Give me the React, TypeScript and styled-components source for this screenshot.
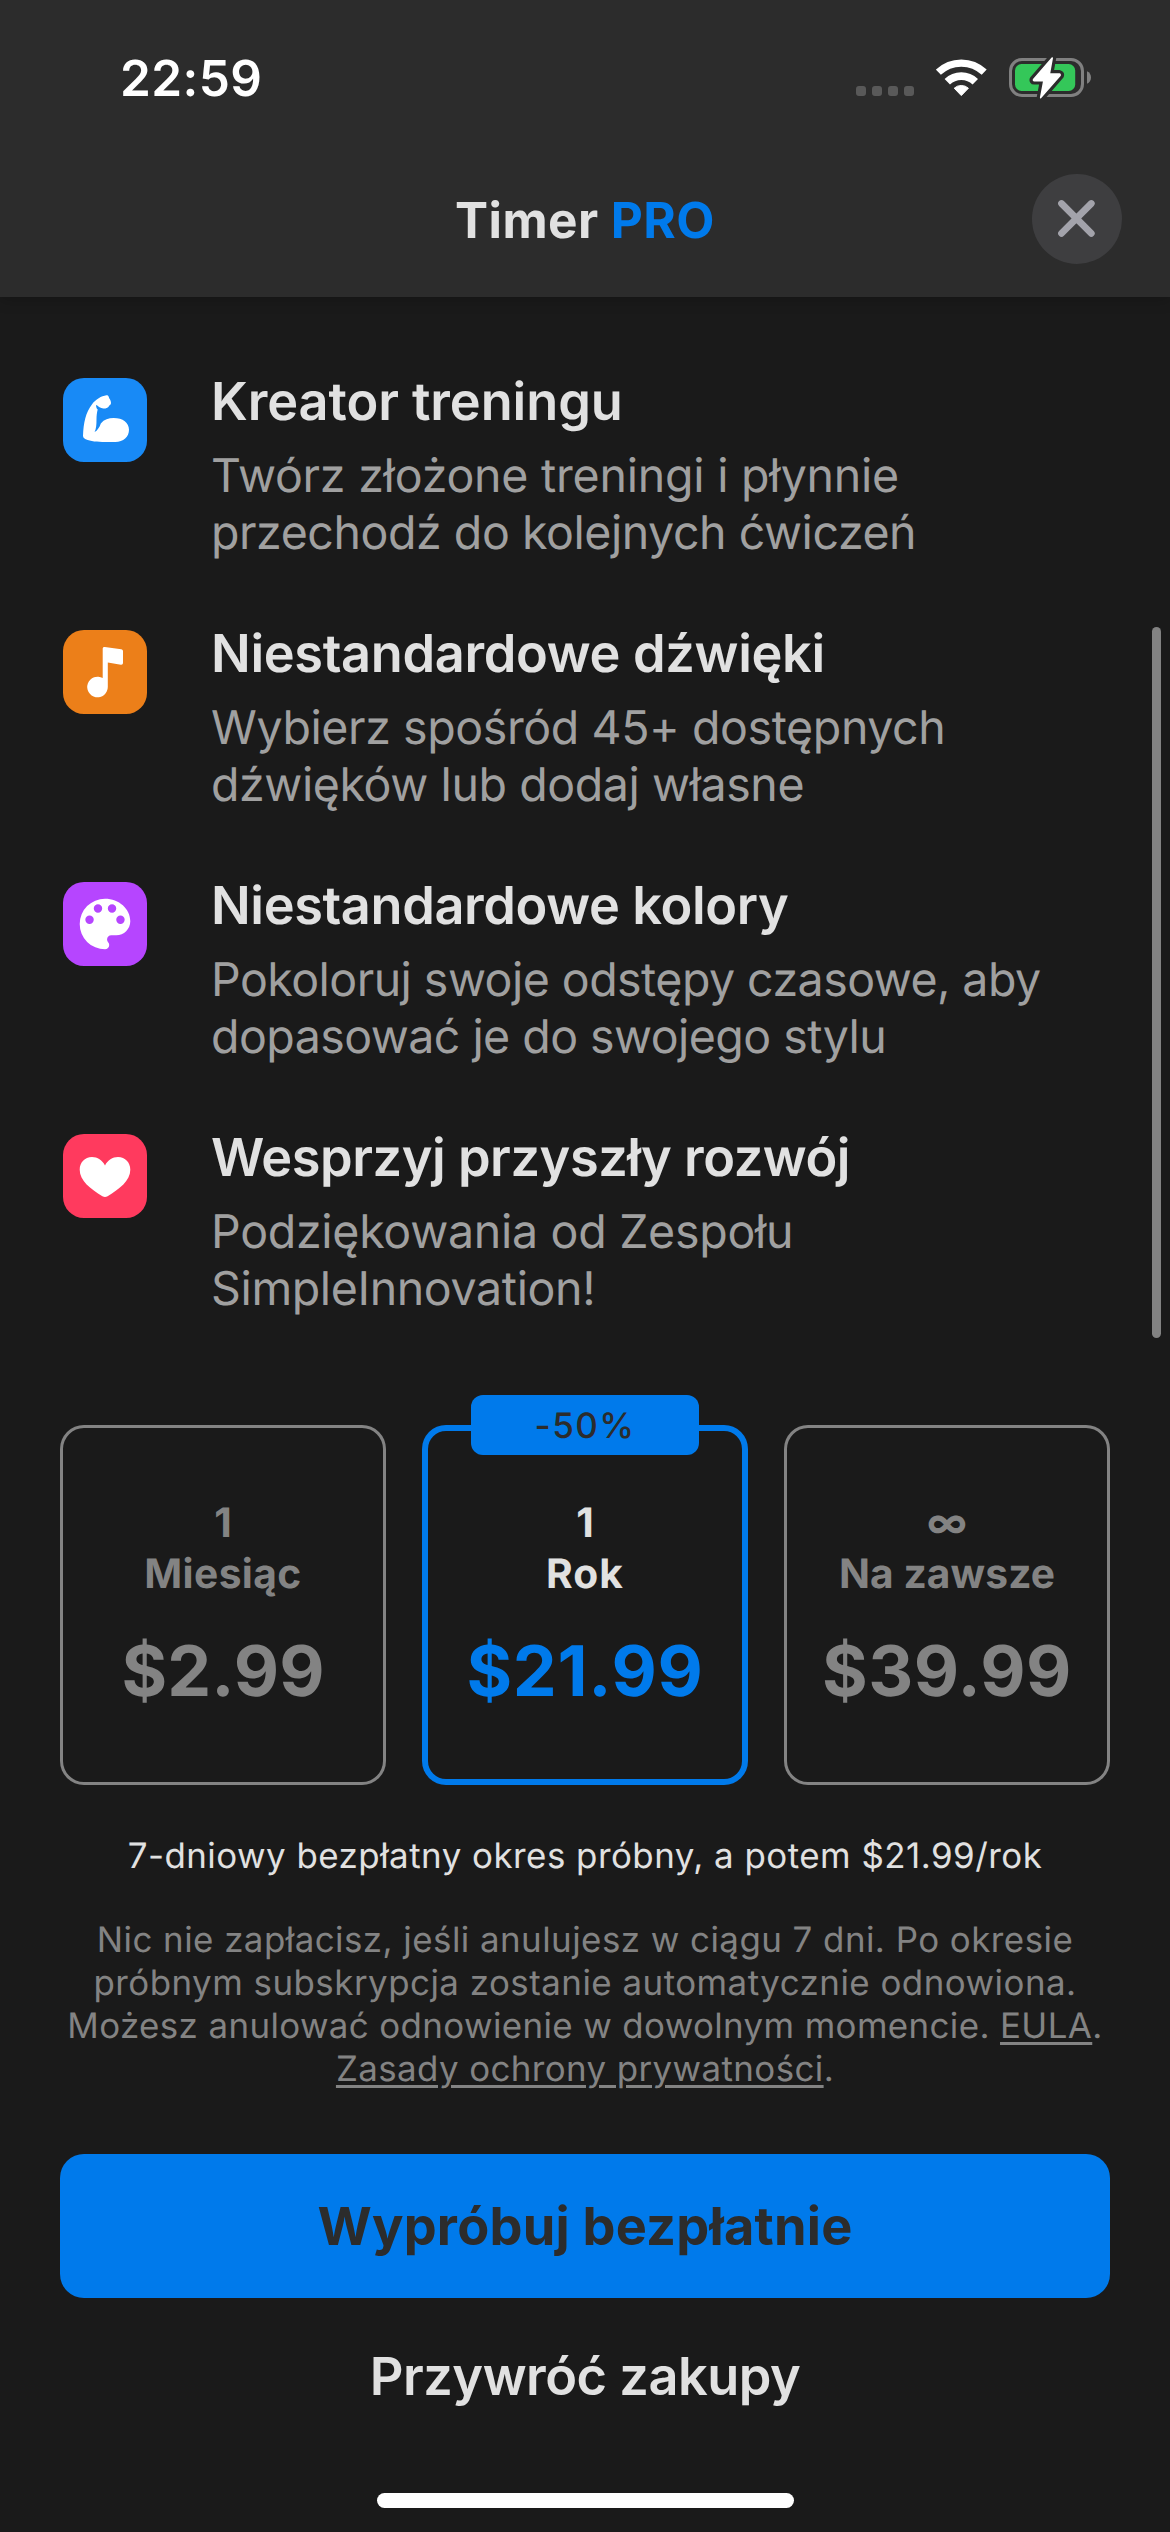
import React from "react";
import styled, { createGlobalStyle } from "styled-components";

const color = {
  bg: "#1a1a1a",
  bar: "#2c2c2c",
  text: "#e1e1e1",
  secondary: "#a0a0a0",
  muted: "#838383",
  accent: "#007aeb",
};

const GlobalStyle = createGlobalStyle`
  * { box-sizing: border-box; }
  html, body { margin: 0; background: ${color.bg}; }
  body {
    font-family: Inter, "Liberation Sans", sans-serif;
    text-rendering: geometricPrecision;
    -webkit-font-smoothing: antialiased;
  }
`;

const Screen = styled.div`
  position: relative;
  width: 1170px;
  height: 2532px;
  display: flex;
  flex-direction: column;
  overflow: hidden;
  background: ${color.bg};
  color: ${color.text};
`;

const Header = styled.header`
  flex: none;
  height: 297px;
  background: ${color.bar};
  box-shadow: 0 2px 14px rgba(0, 0, 0, 0.22);
`;

const StatusBar = styled.div`
  height: 141px;
  padding: 15px 79px 0 120px;
  display: flex;
  align-items: center;
  justify-content: space-between;
`;

const Clock = styled.time`
  font-size: 49.5px;
  line-height: 60px;
  font-weight: 600;
  letter-spacing: 0.43px;
  color: #fff;
`;

const StatusIcons = styled.div`
  display: flex;
  align-items: center;
  gap: 22px;

  svg { display: block; }
`;

const NavBar = styled.div`
  height: 156px;
  padding: 0 48px;
  display: grid;
  grid-template-columns: 1fr auto 1fr;
  align-items: center;
`;

const Title = styled.h1`
  grid-column: 2;
  margin: 0;
  padding-top: 2px;
  font-size: 49.5px;
  line-height: 60px;
  font-weight: 700;
  letter-spacing: 0.45px;
`;

const Pro = styled.span`
  color: ${color.accent};
`;

const CloseButton = styled.button`
  justify-self: end;
  width: 90px;
  height: 90px;
  padding: 0;
  border: 0;
  border-radius: 50%;
  background: #3e3e40;

  svg { display: block; }
`;

const Content = styled.main`
  flex: 1;
  padding: 72px 60px 0;
  display: flex;
  flex-direction: column;
`;

const FeatureList = styled.ul`
  margin: 0;
  padding: 0 0 0 3px;
  list-style: none;
  display: flex;
  flex-direction: column;
  gap: 59px;
`;

const Feature = styled.li`
  display: flex;
  align-items: flex-start;
  gap: 64px;
`;

const FeatureIcon = styled.div<{ $bg: string }>`
  flex: none;
  width: 84px;
  height: 84px;
  margin-top: 9px;
  border-radius: 21px;
  background: ${(p) => p.$bg};

  svg { display: block; }
`;

const FeatureText = styled.div`
  display: flex;
  flex-direction: column;
  gap: 15px;
`;

const FeatureTitle = styled.h2<{ $tracking: number }>`
  margin: 0;
  font-size: 52.3px;
  line-height: 64px;
  font-weight: 600;
  letter-spacing: ${(p) => p.$tracking}px;
  white-space: nowrap;
`;

const FeatureBody = styled.p`
  margin: 0;
  font-size: 46.5px;
  line-height: 57px;
  color: ${color.secondary};
`;

const Line = styled.span<{ $tracking: number }>`
  display: block;
  letter-spacing: ${(p) => p.$tracking}px;
  white-space: nowrap;
`;

const Plans = styled.div`
  margin-top: 107px;
  display: grid;
  grid-template-columns: repeat(3, 326px);
  gap: 36px;
`;

const Plan = styled.div<{ $selected?: boolean }>`
  position: relative;
  height: 360px;
  padding-top: 72px;
  border-radius: 24px;
  box-shadow: inset 0 0 0 ${(p) => (p.$selected ? `6px ${color.accent}` : `3px ${color.muted}`)};
  display: flex;
  flex-direction: column;
  align-items: center;
  color: ${(p) => (p.$selected ? color.text : color.muted)};
`;

const PlanBadge = styled.span`
  position: absolute;
  top: -30px;
  left: 49px;
  width: 228px;
  height: 60px;
  border-radius: 12px;
  background: ${color.accent};
  color: ${color.bar};
  font-size: 35px;
  line-height: 62px;
  font-weight: 500;
  letter-spacing: 1.4px;
  text-align: center;
`;

const PlanPeriod = styled.span<{ $tracking?: number }>`
  font-size: 40.7px;
  line-height: 51px;
  font-weight: 700;
  letter-spacing: ${(p) => p.$tracking ?? 0}px;
`;

const PlanPrice = styled.span<{ $selected?: boolean; $tracking: number }>`
  margin-top: 29px;
  font-size: 69.8px;
  line-height: 86px;
  font-weight: 700;
  letter-spacing: ${(p) => p.$tracking}px;
  color: ${(p) => (p.$selected ? color.accent : color.muted)};
`;

const TrialNote = styled.p`
  margin: 50px 0 0;
  font-size: 34.9px;
  line-height: 43px;
  letter-spacing: 0.476px;
  text-align: center;
`;

const Legal = styled.p`
  margin: 41px 0 0;
  font-size: 34.9px;
  line-height: 43px;
  text-align: center;
  color: ${color.muted};
`;

const LegalLink = styled.a`
  text-decoration: underline;
  text-decoration-thickness: 3px;
  text-underline-offset: 4px;
`;

const PrimaryButton = styled.button`
  flex: none;
  height: 144px;
  margin: 63px 0 0;
  padding: 0;
  border: 0;
  border-radius: 24px;
  background: ${color.accent};
  color: ${color.bar};
  font: 700 52.3px/64px Inter, "Liberation Sans", sans-serif;
  letter-spacing: 0.25px;
`;

const RestoreButton = styled.button`
  flex: none;
  align-self: center;
  margin: 46px 0 0;
  padding: 0;
  border: 0;
  background: none;
  color: ${color.text};
  font: 600 52.3px/64px Inter, "Liberation Sans", sans-serif;
  letter-spacing: -0.467px;
`;

const HomeIndicator = styled.div`
  flex: none;
  align-self: center;
  width: 417px;
  height: 15px;
  margin-top: 85px;
  border-radius: 8px;
  background: #fff;
`;

const ScrollThumb = styled.div`
  position: absolute;
  top: 627px;
  right: 9px;
  width: 9px;
  height: 711px;
  border-radius: 5px;
  background: #828282;
`;

const SignalIcon = () => (
  <svg width="58" height="42" viewBox="0 0 58 42" fill="#595959">
    {[0, 16, 32, 48].map((x) => (
      <rect key={x} x={x} y="29" width="10" height="10" rx="3" />
    ))}
  </svg>
);

const WifiIcon = () => (
  <svg width="51" height="42" viewBox="0 0 51 42" fill="none" stroke="#fff">
    <path d="M2.4 15.2A33.2 33.2 0 0 1 48.2 15.2" strokeWidth="7.2" />
    <path d="M11.3 24.7A20.3 20.3 0 0 1 39.3 24.7" strokeWidth="7.8" />
    <path d="M25.3 38.6L18.2 31.2A10.6 10.6 0 0 1 32.4 31.2Z" fill="#fff" strokeWidth="1" strokeLinejoin="round" />
  </svg>
);

const bolt = "M43.2 1L24.6 22.6Q24.2 23.6 25.2 23.6H34.9L31.7 40.6L51 18.4Q51.4 17.3 50.4 17.1H40.3Z";

const BatteryIcon = () => (
  <svg width="82" height="42" viewBox="0 0 82 42">
    <rect x="1.5" y="2.5" width="72" height="36" rx="11.5" fill="none" stroke="#808080" strokeWidth="3" />
    <path d="M78 14.2C80.6 15.2 82 17.6 82 20.5S80.6 25.8 78 26.8Z" fill="#808080" />
    <rect x="6" y="7" width="60.2" height="27" rx="6.5" fill="#34c759" />
    <path d={bolt} fill={color.bar} stroke={color.bar} strokeWidth="8" strokeLinejoin="round" />
    <path d={bolt} fill="#fff" stroke="#fff" strokeWidth="1.6" strokeLinejoin="round" />
  </svg>
);

const CloseIcon = () => (
  <svg width="90" height="90" viewBox="0 0 90 90" stroke="#a3a3ab" strokeWidth="6.8" strokeLinecap="round">
    <path d="M29.5 29.5L59.3 59.3M59.3 29.5L29.5 59.3" />
  </svg>
);

const MuscleIcon = () => (
  <svg width="84" height="84" viewBox="0 0 84 84" fill="#fff">
    <path d="M20 57.8C20.2 51 20.9 45.6 22.3 40.2C23.8 34.6 26 30.2 28.9 26.4C32.7 21.4 38.4 18 43.4 17.3C44.6 17.2 45.5 17.7 45.8 18.9L46.2 20.3C47.2 21.6 48 23.2 48 25C48 26.2 47.3 27.2 46.2 27.6C45.6 29.4 44.2 30.4 42.4 30.4C39.6 30.4 37 30 34.8 27.9C34 27.4 33.7 27 33.2 27C33 29 33.5 30.4 34.7 31.6C33.9 34.4 33.5 38 33.5 41.5C33.5 47 33.2 50.6 31.6 54.1C34.3 52.4 36.7 49 37.8 45.4C41.2 41.6 45.6 40.1 50.6 40.1C59.9 40.1 66 44.7 66 51.8C66 59 60.4 64 52.3 64H45C37.4 64 29.5 63.7 24.7 62C21.6 61 20 60 20 57.8Z" />
  </svg>
);

const NoteIcon = () => (
  <svg width="84" height="84" viewBox="0 0 84 84" fill="#fff">
    <path d="M39.7 18.8C39.7 17.5 40.6 16.8 41.8 17L58.2 19.2C59.4 19.4 60 20 60 21.2V32.8C60 34.2 59.2 34.9 57.9 34.7L44.8 32.6V57A10.3 10.3 0 1 1 39.7 48.1Z" />
  </svg>
);

const PaletteIcon = () => (
  <svg width="84" height="84" viewBox="0 0 84 84" fill="#fff">
    <path
      transform="translate(8.28 8.28) scale(2.81)"
      d="M12 3a9 9 0 0 0 0 18c.83 0 1.5-.67 1.5-1.5 0-.39-.15-.74-.39-1.01-.23-.26-.38-.61-.38-.99 0-.83.67-1.5 1.5-1.5H16c2.76 0 5-2.24 5-5 0-4.42-4.03-8-9-8zm-5.5 9a1.5 1.5 0 1 1 0-3 1.5 1.5 0 0 1 0 3zm3-4a1.5 1.5 0 1 1 0-3 1.5 1.5 0 0 1 0 3zm5 0a1.5 1.5 0 1 1 0-3 1.5 1.5 0 0 1 0 3zm3 4a1.5 1.5 0 1 1 0-3 1.5 1.5 0 0 1 0 3z"
    />
  </svg>
);

const HeartIcon = () => (
  <svg width="84" height="84" viewBox="0 0 84 84" fill="#fff">
    <path d="M42 31.4C39.4 26.4 34.4 23 29 23C21.7 23 16.7 28.6 16.7 35.7C16.7 46.6 27.6 55 39.4 62.2C41.2 63.2 42.8 63.2 44.6 62.2C56.4 55 67.3 46.6 67.3 35.7C67.3 28.6 62.3 23 55 23C49.6 23 44.6 26.4 42 31.4Z" />
  </svg>
);

type TrackedText = [text: string, tracking: number];

const features: { bg: string; icon: React.ReactNode; title: TrackedText; body: TrackedText[] }[] = [
  {
    bg: "#188af6",
    icon: <MuscleIcon />,
    title: ["Kreator treningu", -0.08],
    body: [["Twórz złożone treningi i płynnie", -0.22], ["przechodź do kolejnych ćwiczeń", -0.44]],
  },
  {
    bg: "#ec7f19",
    icon: <NoteIcon />,
    title: ["Niestandardowe dźwięki", -0.33],
    body: [["Wybierz spośród 45+ dostępnych", -0.4], ["dźwięków lub dodaj własne", -0.41]],
  },
  {
    bg: "#b645ff",
    icon: <PaletteIcon />,
    title: ["Niestandardowe kolory", -0.38],
    body: [["Pokoloruj swoje odstępy czasowe, aby", -0.53], ["dopasować je do swojego stylu", -0.54]],
  },
  {
    bg: "#ff3a5e",
    icon: <HeartIcon />,
    title: ["Wesprzyj przyszły rozwój", -0.45],
    body: [["Podziękowania od Zespołu", -0.28], ["SimpleInnovation!", -0.36]],
  },
];

const plans: { count: string; unit: TrackedText; price: TrackedText; badge?: string }[] = [
  { count: "1", unit: ["Miesiąc", 0.4], price: ["$2.99", 0.1] },
  { count: "1", unit: ["Rok", 1.1], price: ["$21.99", 0.7] , badge: "-50%" },
  { count: "∞", unit: ["Na zawsze", 0.1], price: ["$39.99", 0.45] },
];

export default function App() {
  return (
    <Screen>
      <GlobalStyle />
      <Header>
        <StatusBar>
          <Clock>22:59</Clock>
          <StatusIcons>
            <SignalIcon />
            <WifiIcon />
            <BatteryIcon />
          </StatusIcons>
        </StatusBar>
        <NavBar>
          <Title>
            Timer <Pro>PRO</Pro>
          </Title>
          <CloseButton>
            <CloseIcon />
          </CloseButton>
        </NavBar>
      </Header>
      <Content>
        <FeatureList>
          {features.map(({ bg, icon, title, body }) => (
            <Feature key={title[0]}>
              <FeatureIcon $bg={bg}>{icon}</FeatureIcon>
              <FeatureText>
                <FeatureTitle $tracking={title[1]}>{title[0]}</FeatureTitle>
                <FeatureBody>
                  {body.map(([text, tracking]) => (
                    <Line key={text} $tracking={tracking}>{text}</Line>
                  ))}
                </FeatureBody>
              </FeatureText>
            </Feature>
          ))}
        </FeatureList>
        <Plans>
          {plans.map(({ count, unit, price, badge }) => (
            <Plan key={price[0]} $selected={!!badge}>
              {badge && <PlanBadge>{badge}</PlanBadge>}
              <PlanPeriod>{count}</PlanPeriod>
              <PlanPeriod $tracking={unit[1]}>{unit[0]}</PlanPeriod>
              <PlanPrice $selected={!!badge} $tracking={price[1]}>{price[0]}</PlanPrice>
            </Plan>
          ))}
        </Plans>
        <TrialNote>7-dniowy bezpłatny okres próbny, a potem $21.99/rok</TrialNote>
        <Legal>
          <Line $tracking={0.456}>Nic nie zapłacisz, jeśli anulujesz w ciągu 7 dni. Po okresie</Line>
          <Line $tracking={0.477}>próbnym subskrypcja zostanie automatycznie odnowiona.</Line>
          <Line $tracking={0.374}>
            Możesz anulować odnowienie w dowolnym momencie. <LegalLink>EULA</LegalLink>.
          </Line>
          <Line $tracking={0.391}>
            <LegalLink>Zasady ochrony prywatności</LegalLink>.
          </Line>
        </Legal>
        <PrimaryButton>Wypróbuj bezpłatnie</PrimaryButton>
        <RestoreButton>Przywróć zakupy</RestoreButton>
        <HomeIndicator />
      </Content>
      <ScrollThumb />
    </Screen>
  );
}
